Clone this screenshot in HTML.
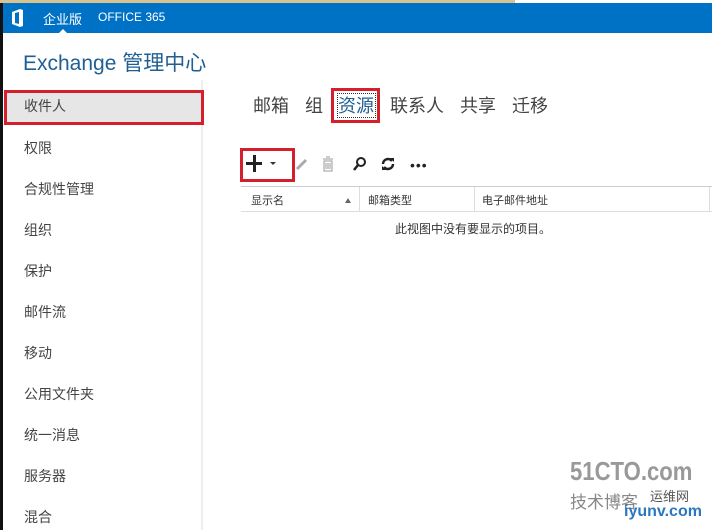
<!DOCTYPE html>
<html><head><meta charset="utf-8"><style>
*{margin:0;padding:0;box-sizing:border-box}
body{width:712px;height:530px;overflow:hidden;background:#fff;font-family:"Liberation Sans","Noto Sans CJK SC",sans-serif;position:relative}
.a{position:absolute}
.nav{position:absolute;left:24px;font-size:14px;color:#444}
.tab{position:absolute;top:92px;font-size:18px;color:#444}
.th{position:absolute;top:192px;font-size:11px;color:#333}
</style></head><body>
<div class="a" style="left:0;top:0;width:515px;height:3px;background:#d9c38f"></div>
<div class="a" style="left:0;top:3px;width:712px;height:30px;background:#0072c6"></div>
<div class="a" style="left:0;top:3px;width:3px;height:527px;background:#111"></div>
<svg class="a" style="left:10px;top:9px" width="14" height="18" viewBox="0 0 14 18"><path d="M2 3 L10 0 L13 1 L13 17 L10 18 L2 15 Z M5 4 L5 14 L9 15 L9 3 Z" fill="#fff" fill-rule="evenodd"/></svg>
<div class="a" style="left:43px;top:9px;font-size:13px;color:#fff">企业版</div>
<div class="a" style="left:59px;top:29px;width:0;height:0;border-left:4px solid transparent;border-right:4px solid transparent;border-bottom:4px solid #fff"></div>
<div class="a" style="left:98px;top:10px;font-size:12px;color:#fff">OFFICE 365</div>
<div class="a" style="left:23px;top:47px;font-size:21px;color:#1f5f93">Exchange 管理中心</div>
<div class="a" style="left:201px;top:80px;width:2px;height:450px;background:#eee"></div>
<div class="a" style="left:4px;top:90px;width:200px;height:35px;background:#e6e6e6;border:3px solid #d4202a"></div>
<div class="nav" style="top:96px">收件人</div>
<div class="nav" style="top:138px">权限</div>
<div class="nav" style="top:179px">合规性管理</div>
<div class="nav" style="top:220px">组织</div>
<div class="nav" style="top:261px">保护</div>
<div class="nav" style="top:302px">邮件流</div>
<div class="nav" style="top:343px">移动</div>
<div class="nav" style="top:384px">公用文件夹</div>
<div class="nav" style="top:425px">统一消息</div>
<div class="nav" style="top:466px">服务器</div>
<div class="nav" style="top:507px">混合</div>
<div class="tab" style="left:253px">邮箱</div>
<div class="tab" style="left:305px">组</div>
<div class="a" style="left:331px;top:88px;width:49px;height:35px;border:3px solid #d4202a"></div>
<div class="a" style="left:337px;top:93px;width:39px;height:25px;border:1px dotted #333"></div>
<div class="tab" style="left:338px;color:#1f5f93">资源</div>
<div class="tab" style="left:390px">联系人</div>
<div class="tab" style="left:460px">共享</div>
<div class="tab" style="left:512px">迁移</div>
<div class="a" style="left:240px;top:148px;width:55px;height:34px;border:3px solid #d4202a"></div>
<div class="a" style="left:246px;top:162px;width:16px;height:3px;background:#222"></div>
<div class="a" style="left:253px;top:155px;width:3px;height:17px;background:#222"></div>
<div class="a" style="left:270px;top:162px;border-left:3px solid transparent;border-right:3px solid transparent;border-top:3px solid #333"></div>
<svg class="a" style="left:295px;top:157px" width="14" height="14"><path d="M2 12 L11 3" stroke="#aaa" stroke-width="3"/></svg>
<svg class="a" style="left:321px;top:156px" width="14" height="16"><path d="M2 3h10M5 1h4M3 5h8v10H3z" stroke="#999" fill="none"/><path d="M5 7v6M7 7v6M9 7v6" stroke="#999"/></svg>
<svg class="a" style="left:352px;top:156px" width="16" height="16"><circle cx="9" cy="6" r="4" stroke="#222" stroke-width="2" fill="none"/><path d="M6 9L2 14" stroke="#222" stroke-width="2.5"/></svg>
<svg class="a" style="left:380px;top:156px" width="16" height="16"><path d="M3 8a5 5 0 0 1 9-3M13 8a5 5 0 0 1-9 3" stroke="#222" stroke-width="2.5" fill="none"/><path d="M10 2l4 0 0 4zM6 14l-4 0 0-4z" fill="#222"/></svg>
<div class="a" style="left:410px;top:163px;font-size:14px;color:#222;letter-spacing:1px;line-height:4px">•••</div>
<div class="a" style="left:241px;top:186px;width:471px;height:1px;background:#ccc"></div>
<div class="a" style="left:241px;top:211px;width:471px;height:1px;background:#ddd"></div>
<div class="a" style="left:359px;top:187px;width:1px;height:24px;background:#ddd"></div>
<div class="a" style="left:474px;top:187px;width:1px;height:24px;background:#ddd"></div>
<div class="a" style="left:709px;top:187px;width:1px;height:24px;background:#ddd"></div>
<div class="th" style="left:251px">显示名</div>
<div class="a" style="left:345px;top:198px;border-left:3px solid transparent;border-right:3px solid transparent;border-bottom:5px solid #666"></div>
<div class="th" style="left:368px">邮箱类型</div>
<div class="th" style="left:482px">电子邮件地址</div>
<div class="a" style="left:395px;top:220px;font-size:12px;color:#333">此视图中没有要显示的项目。</div>
<div class="a" style="left:570px;top:456px;font:bold 26px 'Liberation Sans',sans-serif;color:#999;transform:scaleX(.85);transform-origin:left">51CTO.com</div>
<div class="a" style="left:570px;top:488px;font-size:17px;color:#888">技术博客</div>
<div class="a" style="left:650px;top:486px;font-size:13px;color:#555">运维网</div>
<div class="a" style="left:624px;top:503px;font:bold 16px 'Liberation Sans',sans-serif;color:#2a78c0">iyunv.com</div>
</body></html>
